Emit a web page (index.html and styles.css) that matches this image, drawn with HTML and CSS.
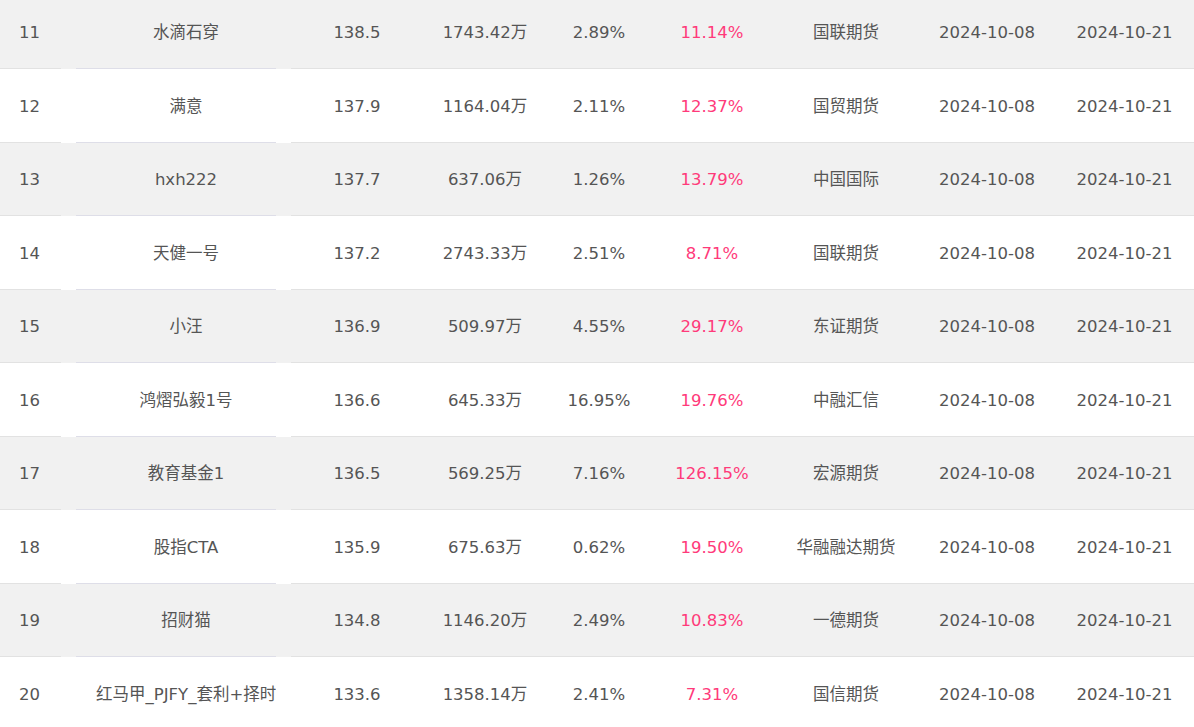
FILE: index.html
```html
<!DOCTYPE html>
<html lang="zh-CN">
<head>
<meta charset="utf-8">
<link rel="stylesheet" href="styles.css">
</head>
<body>
<div class="list">
  <div class="row alt"><div class="c rank">11</div><div class="c name"><div class="nm">水滴石穿</div></div><div class="c">138.5</div><div class="c">1743.42万</div><div class="c">2.89%</div><div class="c up">11.14%</div><div class="c">国联期货</div><div class="c">2024-10-08</div><div class="c">2024-10-21</div></div>
  <div class="row"><div class="c rank">12</div><div class="c name"><div class="nm">满意</div></div><div class="c">137.9</div><div class="c">1164.04万</div><div class="c">2.11%</div><div class="c up">12.37%</div><div class="c">国贸期货</div><div class="c">2024-10-08</div><div class="c">2024-10-21</div></div>
  <div class="row alt"><div class="c rank">13</div><div class="c name"><div class="nm">hxh222</div></div><div class="c">137.7</div><div class="c">637.06万</div><div class="c">1.26%</div><div class="c up">13.79%</div><div class="c">中国国际</div><div class="c">2024-10-08</div><div class="c">2024-10-21</div></div>
  <div class="row"><div class="c rank">14</div><div class="c name"><div class="nm">天健一号</div></div><div class="c">137.2</div><div class="c">2743.33万</div><div class="c">2.51%</div><div class="c up">8.71%</div><div class="c">国联期货</div><div class="c">2024-10-08</div><div class="c">2024-10-21</div></div>
  <div class="row alt"><div class="c rank">15</div><div class="c name"><div class="nm">小汪</div></div><div class="c">136.9</div><div class="c">509.97万</div><div class="c">4.55%</div><div class="c up">29.17%</div><div class="c">东证期货</div><div class="c">2024-10-08</div><div class="c">2024-10-21</div></div>
  <div class="row"><div class="c rank">16</div><div class="c name"><div class="nm">鸿熠弘毅1号</div></div><div class="c">136.6</div><div class="c">645.33万</div><div class="c">16.95%</div><div class="c up">19.76%</div><div class="c">中融汇信</div><div class="c">2024-10-08</div><div class="c">2024-10-21</div></div>
  <div class="row alt"><div class="c rank">17</div><div class="c name"><div class="nm">教育基金1</div></div><div class="c">136.5</div><div class="c">569.25万</div><div class="c">7.16%</div><div class="c up">126.15%</div><div class="c">宏源期货</div><div class="c">2024-10-08</div><div class="c">2024-10-21</div></div>
  <div class="row"><div class="c rank">18</div><div class="c name"><div class="nm">股指CTA</div></div><div class="c">135.9</div><div class="c">675.63万</div><div class="c">0.62%</div><div class="c up">19.50%</div><div class="c">华融融达期货</div><div class="c">2024-10-08</div><div class="c">2024-10-21</div></div>
  <div class="row alt"><div class="c rank">19</div><div class="c name"><div class="nm">招财猫</div></div><div class="c">134.8</div><div class="c">1146.20万</div><div class="c">2.49%</div><div class="c up">10.83%</div><div class="c">一德期货</div><div class="c">2024-10-08</div><div class="c">2024-10-21</div></div>
  <div class="row"><div class="c rank">20</div><div class="c name"><div class="nm">红马甲_PJFY_套利+择时</div></div><div class="c">133.6</div><div class="c">1358.14万</div><div class="c">2.41%</div><div class="c up">7.31%</div><div class="c">国信期货</div><div class="c">2024-10-08</div><div class="c">2024-10-21</div></div>
</div>
</body>
</html>
```

FILE: styles.css
```css
html, body {
  margin: 0;
  padding: 0;
  background: #ffffff;
  overflow: hidden;
}
body {
  font-family: "DejaVu Sans", "Noto Sans CJK SC", sans-serif;
  font-size: 16.5px;
  line-height: 22px;
  color: #555555;
}
.list {
  margin-top: -5px;
}
.row {
  display: grid;
  grid-template-columns: 61px 230px 132px 124px 104px 122px 146px 136px 139px;
  height: 74px;
  background: #ffffff;
}
.row:nth-child(odd) {
  height: 73px;
}
.row:first-child {
  height: 74px;
}
.row.alt {
  background: #f1f1f1;
}
.c {
  display: flex;
  align-items: center;
  justify-content: center;
  padding-top: 2px;
  border-bottom: 1px solid #e2e2e2;
  white-space: nowrap;
}
.rank {
  justify-content: flex-start;
  padding-left: 19px;
}
.name {
  border-bottom: none;
  padding: 0 15px;
  align-items: stretch;
}
.nm {
  flex: 1;
  display: flex;
  align-items: center;
  justify-content: center;
  padding-top: 2px;
  padding-left: 20px;
  overflow: hidden;
  border-bottom: 1px solid #dedee8;
  min-width: 0;
}
.row:last-child .nm {
  justify-content: flex-start;
}
.up {
  color: #ff3a7a;
}
```
